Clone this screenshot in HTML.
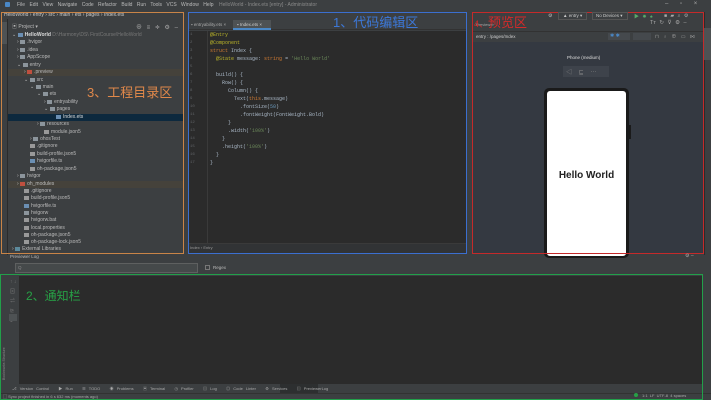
<!DOCTYPE html>
<html><head><meta charset="utf-8"><style>
*{margin:0;padding:0;box-sizing:border-box}
body{width:711px;height:400px;background:#3c3f41;position:relative;overflow:hidden;font-family:"Liberation Sans","Noto Sans CJK SC",sans-serif;font-size:5px;color:#bbbbbb}
.a{position:absolute;white-space:nowrap}
.row{position:absolute;left:8px;width:175px;height:7px;line-height:7px;font-size:5px;color:#bbb}
.fo{display:inline-block;width:5px;height:4px;background:#8c959c;margin-right:2px;vertical-align:-0.5px}
.code{position:absolute;left:210px;font-family:"Liberation Mono",monospace;font-size:5px;color:#a9b7c6;height:8px;line-height:8px}
.ln{position:absolute;left:190px;width:10px;font-family:"Liberation Mono",monospace;font-size:4px;color:#606366;height:8px;line-height:8px}
.k{color:#cc7832}.s{color:#6a8759}.d{color:#bbb529}
</style></head><body>
<!-- menu bar -->
<div class="a" style="left:0;top:0;width:711px;height:11px;background:#3c3f41"></div>
<div class="a" style="left:5px;top:2px;width:5px;height:5px;background:#4a88c7;border-radius:1px"></div>
<div class="a" style="left:17px;top:2px;font-size:5px;color:#bbb;word-spacing:3px">File Edit View Navigate Code Refactor Build Run Tools VCS Window Help</div>
<div class="a" style="left:219px;top:2px;font-size:5px;color:#8a8a8a">HelloWorld - Index.ets [entry] - Administrator</div>
<div class="a" style="left:665px;top:1px;font-size:6px;color:#aaa;word-spacing:10px">– ▫ ×</div>
<!-- breadcrumb -->
<div class="a" style="left:4px;top:12px;font-size:5px;color:#ccc">HelloWorld  ›  entry  ›  src  ›  main  ›  ets  ›  pages  ›  Index.ets</div>
<!-- left tool strip -->
<div class="a" style="left:0;top:19px;width:8px;height:236px;background:#3c3f41;border-right:1px solid #2b2b2b"></div>
<div class="a" style="left:1px;top:22px;width:6px;height:22px;background:#4e5254"></div>
<!-- project panel -->
<div class="a" style="left:8px;top:19px;width:176px;height:236px;background:#3c3f41"></div>
<div class="a" style="left:12px;top:23px;font-size:5px;color:#bbb">▣ Project ▾</div>
<div class="a" style="left:136px;top:22px;font-size:6px;color:#aaa;word-spacing:3px">⊕ ≡ ≑ ⚙ –</div>
<div class="a" style="left:8px;top:69px;width:175px;height:7px;background:#45423b"></div>
<div class="a" style="left:8px;top:114px;width:175px;height:7px;background:#0d293e"></div>
<div class="a" style="left:8px;top:181px;width:175px;height:7px;background:#45423b"></div>
<div class="row" style="top:32px;padding-left:4px">⌄ <span class="fo" style="background:#6b8fb3"></span><b style="color:#ddd">HelloWorld</b> <span style="color:#777">D:\Harmony\DS\ FirstCourse\HelloWorld</span></div>
<div class="row" style="top:39px;padding-left:9px">› <span class="fo"></span>.hvigor</div>
<div class="row" style="top:47px;padding-left:9px">› <span class="fo"></span>.idea</div>
<div class="row" style="top:54px;padding-left:9px">› <span class="fo"></span>AppScope</div>
<div class="row" style="top:62px;padding-left:9px">⌄ <span class="fo"></span>entry</div>
<div class="row" style="top:69px;padding-left:16px">› <span class="fo" style="background:#c0503f"></span>.preview</div>
<div class="row" style="top:77px;padding-left:16px">⌄ <span class="fo"></span>src</div>
<div class="row" style="top:84px;padding-left:22px">⌄ <span class="fo"></span>main</div>
<div class="row" style="top:91px;padding-left:29px">⌄ <span class="fo"></span>ets</div>
<div class="row" style="top:99px;padding-left:36px">› <span class="fo"></span>entryability</div>
<div class="row" style="top:106px;padding-left:36px">⌄ <span class="fo"></span>pages</div>
<div class="row" style="top:114px;padding-left:48px;color:#ddd"><span class="fo" style="background:#6b8fb3"></span>Index.ets</div>
<div class="row" style="top:121px;padding-left:29px">› <span class="fo"></span>resources</div>
<div class="row" style="top:129px;padding-left:36px"><span class="fo" style="background:#999"></span>module.json5</div>
<div class="row" style="top:136px;padding-left:22px">› <span class="fo"></span>ohosTest</div>
<div class="row" style="top:143px;padding-left:22px"><span class="fo" style="background:#999"></span>.gitignore</div>
<div class="row" style="top:151px;padding-left:22px"><span class="fo" style="background:#999"></span>build-profile.json5</div>
<div class="row" style="top:158px;padding-left:22px"><span class="fo" style="background:#6b8fb3"></span>hvigorfile.ts</div>
<div class="row" style="top:166px;padding-left:22px"><span class="fo" style="background:#999"></span>oh-package.json5</div>
<div class="row" style="top:173px;padding-left:9px">› <span class="fo"></span>hvigor</div>
<div class="row" style="top:181px;padding-left:9px">› <span class="fo" style="background:#c0503f"></span>oh_modules</div>
<div class="row" style="top:188px;padding-left:16px"><span class="fo" style="background:#999"></span>.gitignore</div>
<div class="row" style="top:195px;padding-left:16px"><span class="fo" style="background:#999"></span>build-profile.json5</div>
<div class="row" style="top:203px;padding-left:16px"><span class="fo" style="background:#6b8fb3"></span>hvigorfile.ts</div>
<div class="row" style="top:210px;padding-left:16px"><span class="fo"></span>hvigorw</div>
<div class="row" style="top:217px;padding-left:16px"><span class="fo" style="background:#999"></span>hvigorw.bat</div>
<div class="row" style="top:225px;padding-left:16px"><span class="fo" style="background:#999"></span>local.properties</div>
<div class="row" style="top:232px;padding-left:16px"><span class="fo" style="background:#999"></span>oh-package.json5</div>
<div class="row" style="top:239px;padding-left:16px"><span class="fo" style="background:#999"></span>oh-package-lock.json5</div>
<div class="row" style="top:246px;padding-left:4px">› <span class="fo" style="background:#5c8a9c"></span>External Libraries</div>
<div class="a" style="left:87px;top:82px;font-size:13px;color:#e0884a">3、工程目录区</div>
<div class="a" style="left:1px;top:12px;width:183px;height:242px;border:1px solid #c98447"></div>
<!-- editor -->
<div class="a" style="left:188px;top:20px;width:279px;height:10px;background:#3c3f41;border-bottom:1px solid #323232"></div>
<div class="a" style="left:191px;top:22px;font-size:4.5px;color:#aaa">▪ entryability.ets ×</div>
<div class="a" style="left:233px;top:20px;width:38px;height:10px;background:#4e5254;border-bottom:2px solid #4a88c7"></div>
<div class="a" style="left:237px;top:22px;font-size:4.5px;color:#ccc">▪ Index.ets ×</div>
<div class="a" style="left:188px;top:31px;width:279px;height:212px;background:#2b2b2b"></div>
<div class="a" style="left:207px;top:31px;width:1px;height:212px;background:#3a3a3a"></div>
<div class="a" style="left:188px;top:243px;width:279px;height:10px;background:#313335;border-top:1px solid #3a3a3a"></div>
<div class="a" style="left:190px;top:245px;font-size:4px;color:#999">Index  ›  Entry</div>
<div class="ln" style="top:31px">1</div><div class="ln" style="top:39px">2</div><div class="ln" style="top:47px">3</div><div class="ln" style="top:55px">4</div><div class="ln" style="top:63px">5</div><div class="ln" style="top:71px">6</div><div class="ln" style="top:79px">7</div><div class="ln" style="top:87px">8</div><div class="ln" style="top:95px">9</div><div class="ln" style="top:103px">10</div><div class="ln" style="top:111px">11</div><div class="ln" style="top:119px">12</div><div class="ln" style="top:127px">13</div><div class="ln" style="top:135px">14</div><div class="ln" style="top:143px">15</div><div class="ln" style="top:151px">16</div><div class="ln" style="top:159px">17</div>
<div class="code d" style="top:31px">@Entry</div>
<div class="code d" style="top:39px">@Component</div>
<div class="code" style="top:47px"><span class="k">struct</span> Index {</div>
<div class="code" style="top:55px">&nbsp;&nbsp;<span class="d">@State</span> message: <span class="k">string</span> = <span class="s">'Hello World'</span></div>
<div class="code" style="top:71px">&nbsp;&nbsp;build() {</div>
<div class="code" style="top:79px">&nbsp;&nbsp;&nbsp;&nbsp;Row() {</div>
<div class="code" style="top:87px">&nbsp;&nbsp;&nbsp;&nbsp;&nbsp;&nbsp;Column() {</div>
<div class="code" style="top:95px">&nbsp;&nbsp;&nbsp;&nbsp;&nbsp;&nbsp;&nbsp;&nbsp;Text(<span class="k">this</span>.message)</div>
<div class="code" style="top:103px">&nbsp;&nbsp;&nbsp;&nbsp;&nbsp;&nbsp;&nbsp;&nbsp;&nbsp;&nbsp;.fontSize(<span style="color:#6897bb">50</span>)</div>
<div class="code" style="top:111px">&nbsp;&nbsp;&nbsp;&nbsp;&nbsp;&nbsp;&nbsp;&nbsp;&nbsp;&nbsp;.fontWeight(FontWeight.Bold)</div>
<div class="code" style="top:119px">&nbsp;&nbsp;&nbsp;&nbsp;&nbsp;&nbsp;}</div>
<div class="code" style="top:127px">&nbsp;&nbsp;&nbsp;&nbsp;&nbsp;&nbsp;.width(<span class="s">'100%'</span>)</div>
<div class="code" style="top:135px">&nbsp;&nbsp;&nbsp;&nbsp;}</div>
<div class="code" style="top:143px">&nbsp;&nbsp;&nbsp;&nbsp;.height(<span class="s">'100%'</span>)</div>
<div class="code" style="top:151px">&nbsp;&nbsp;}</div>
<div class="code" style="top:159px">}</div>
<div class="a" style="left:333px;top:12px;font-size:13px;color:#3d78d8">1、代码编辑区</div>
<div class="a" style="left:188px;top:12px;width:279px;height:242px;border:1px solid #3b6fd0"></div>
<!-- preview -->
<div class="a" style="left:473px;top:19px;width:230px;height:10px;background:#3c3f41"></div>
<div class="a" style="left:476px;top:22px;font-size:4px;color:#aaa">Previewer</div>
<div class="a" style="left:650px;top:20px;font-size:5.5px;color:#aaa;word-spacing:2px">Tт ↻ ⊽ ⚙ –</div>
<div class="a" style="left:473px;top:31px;width:230px;height:11px;background:#3c3f41;border-top:1px solid #323232"></div>
<div class="a" style="left:476px;top:34px;font-size:4.5px;color:#ccc">entry : /pages/Index</div>
<div class="a" style="left:608px;top:33px;width:22px;height:7px;background:#45494d"></div>
<div class="a" style="left:610px;top:33px;font-size:5px;color:#4a88c7">✱ ✱</div>
<div class="a" style="left:633px;top:33px;width:18px;height:7px;background:#45494d"></div>
<div class="a" style="left:655px;top:33px;font-size:5px;color:#999;word-spacing:3px">⊓ ♁ ⊕ ▭ ⋈</div>
<div class="a" style="left:473px;top:42px;width:230px;height:211px;background:#343941"></div>
<div class="a" style="left:567px;top:55px;font-size:4.5px;color:#ddd">Phone (medium)</div>
<div class="a" style="left:563px;top:66px;width:46px;height:11px;background:#3e434b"></div>
<div class="a" style="left:566px;top:67px;font-size:6px;color:#888;word-spacing:5px">◁ ⊑ ⋯</div>
<div class="a" style="left:544px;top:88px;width:85px;height:170px;background:#1a1a1a;border-radius:5px"></div>
<div class="a" style="left:547px;top:91px;width:79px;height:165px;background:#fff;border-radius:3px"></div>
<div class="a" style="left:629px;top:125px;width:2px;height:14px;background:#1a1a1a"></div>
<div class="a" style="left:547px;top:170px;width:79px;text-align:center;font-size:10px;font-weight:bold;color:#222">Hello World</div>
<div class="a" style="left:474px;top:12px;font-size:13px;color:#d42a2a"><span style="font-size:9px">4、</span>预览区</div>
<div class="a" style="left:472px;top:12px;width:232px;height:242px;border:1.5px solid #c52a2a"></div>
<!-- toolbar top right -->
<div class="a" style="left:548px;top:13px;font-size:5px;color:#bbb">⚙</div>
<div class="a" style="left:558px;top:12px;width:29px;height:8px;border:1px solid #555;font-size:4.5px;line-height:6px;padding-left:4px;color:#ccc">▲ entry ▾</div>
<div class="a" style="left:592px;top:12px;width:36px;height:8px;border:1px solid #555;font-size:4.5px;line-height:6px;padding-left:3px;color:#ccc">No Devices ▾</div>
<div class="a" style="left:634px;top:13px;font-size:5px;color:#59a869;word-spacing:2px">▶ ✹ ♠</div>
<div class="a" style="left:664px;top:13px;font-size:5px;color:#aaa;word-spacing:2px">■ ▰ ⌕ ⚙</div>
<!-- right strip -->
<div class="a" style="left:704px;top:12px;width:7px;height:243px;background:#3c3f41;border-left:1px solid #2b2b2b"></div>
<div class="a" style="left:704px;top:28px;width:7px;height:32px;background:#4e5254"></div>
<!-- preview log bar -->
<div class="a" style="left:10px;top:254px;font-size:4.5px;color:#bbb">Previewer Log</div>
<div class="a" style="left:685px;top:253px;font-size:5px;color:#aaa">⚙ –</div>
<div class="a" style="left:15px;top:263px;width:183px;height:10px;background:#45494a;border:1px solid #5e6060"></div>
<div class="a" style="left:18px;top:265px;font-size:4.5px;color:#888">Q</div>
<div class="a" style="left:205px;top:265px;width:5px;height:5px;border:1px solid #777"></div>
<div class="a" style="left:213px;top:265px;font-size:4.5px;color:#bbb">Regex</div>
<!-- notification -->
<div class="a" style="left:19px;top:276px;width:684px;height:108px;background:#2b2b2b"></div>
<div class="a" style="left:10px;top:278px;font-size:5px;color:#777;line-height:9.5px;width:8px;white-space:normal">↑ ↓ ⊠ ⇌ ⊵ ▮</div>
<div class="a" style="left:9px;top:314px;width:8px;height:7px;background:#4e5254"></div>
<div class="a" style="left:2px;top:320px;width:5px;height:60px;font-size:3.5px;color:#888;writing-mode:vertical-rl;transform:rotate(180deg)">Bookmarks  Structure</div>
<div class="a" style="left:26px;top:287px;font-size:12px;color:#27a046">2、通知栏</div>
<div class="a" style="left:8px;top:384px;width:695px;height:9px;background:#3c3f41"></div>
<div class="a" style="left:280px;top:384px;width:38px;height:9px;background:#2d2f30"></div>
<div class="a" style="left:12px;top:386px;font-size:4px;color:#aaa;word-spacing:2px">⎇ Version&nbsp;Control &nbsp; ▶ Run &nbsp; ☰ TODO &nbsp; ◉ Problems &nbsp; ▣ Terminal &nbsp; ◷ Profiler &nbsp; ▤ Log &nbsp; ◎ Code&nbsp;Linter &nbsp; ⚙ Services &nbsp; ▤ PreviewerLog</div>
<div class="a" style="left:0;top:393px;width:711px;height:7px;background:#3c3f41;border-top:1px solid #323232"></div>
<div class="a" style="left:3px;top:394px;font-size:4px;color:#aaa">▢ Sync project finished in 6 s 632 ms (moments ago)</div>
<div class="a" style="left:634px;top:393px;width:4px;height:4px;border-radius:50%;background:#27a046"></div>
<div class="a" style="left:642px;top:393px;font-size:4px;color:#aaa">1:1 &nbsp;LF &nbsp;UTF-8 &nbsp;4 spaces</div>
<div class="a" style="left:0;top:274px;width:703px;height:126px;border:1.5px solid #22a04a"></div>
</body></html>
